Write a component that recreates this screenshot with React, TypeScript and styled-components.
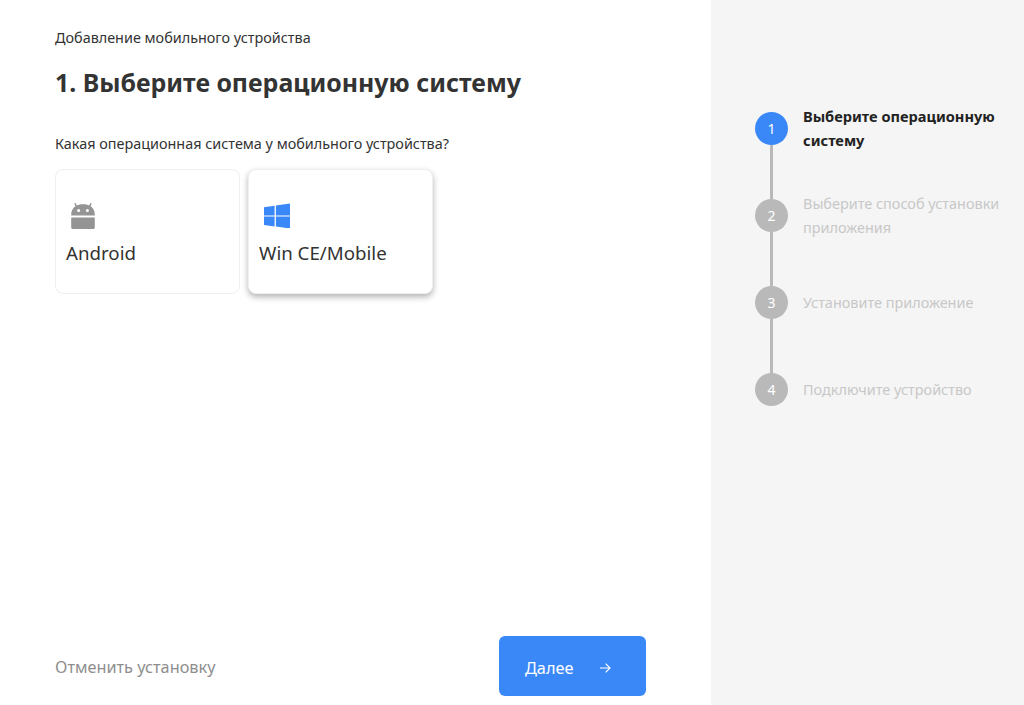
import React from 'react'
import styled, { createGlobalStyle } from 'styled-components'

const GlobalStyle = createGlobalStyle`
  html, body {
    margin: 0;
    padding: 0;
    background: #fff;
    font-family: "Noto Sans", "Open Sans", sans-serif;
    color: #333;
  }
`

const AndroidIcon = () => (
  <svg width="26" height="28" viewBox="0 0 26 28" fill="#949494">
    <path d="M1.2 14.5V13.5C1.2 9.8 2.8 6.9 5.4 5.2L4.3 2.6l1.3-.6 1.2 2.5C8.5 3.7 10.6 3.2 13 3.2s4.5.5 6.2 1.3L20.4 2l1.3.6-1.1 2.6c2.6 1.7 4.2 4.6 4.2 8.3v1H1.2z" />
    <circle cx="8.6" cy="9.6" r="1.5" fill="#fff" />
    <circle cx="17.4" cy="9.6" r="1.5" fill="#fff" />
    <path d="M1.2 16.5h23.6v10c0 .9-.7 1.5-1.5 1.5H2.7c-.8 0-1.5-.6-1.5-1.5v-10z" />
  </svg>
)

const WindowsIcon = () => (
  <svg width="26" height="26" viewBox="0 -1 26 26" fill="#3a88f8">
    <path d="M0 4.2l10.6-1.5v9.7H0V4.2z" />
    <path d="M11.9 2.5L26 .5v11.9H11.9V2.5z" />
    <path d="M0 13.6h10.6v9.8L0 21.9v-8.3z" />
    <path d="M11.9 13.6H26v11.9l-14.1-2V13.6z" />
  </svg>
)

const ArrowIcon = () => (
  <svg width="12" height="12" viewBox="0 0 12 12" fill="none" stroke="#fff" strokeWidth="1.2">
    <path d="M1 6h10M6.6 1.6L11 6l-4.4 4.4" />
  </svg>
)

const STEPS = [
  'Выберите операционную систему',
  'Выберите способ установки приложения',
  'Установите приложение',
  'Подключите устройство',
]

export default function App() {
  return (
    <>
      <GlobalStyle />
      <Page>
        <Main>
          <Crumb>Добавление мобильного устройства</Crumb>
          <Title>1. Выберите операционную систему</Title>
          <Question>Какая операционная система у мобильного устройства?</Question>
          <Cards>
            <Card>
              <IconSlot><AndroidIcon /></IconSlot>
              <CardLabel>Android</CardLabel>
            </Card>
            <Card $raised>
              <IconSlot $offset={5}><WindowsIcon /></IconSlot>
              <CardLabel>Win CE/Mobile</CardLabel>
            </Card>
          </Cards>
          <Footer>
            <Cancel>Отменить установку</Cancel>
            <NextButton>
              Далее
              <ArrowIcon />
            </NextButton>
          </Footer>
        </Main>
        <Side>
          {STEPS.map((text, i) => (
            <Step key={text}>
              <Rail>
                <Circle $active={i === 0}>{i + 1}</Circle>
                {i < STEPS.length - 1 && <Line />}
              </Rail>
              <StepText $active={i === 0}>{text}</StepText>
            </Step>
          ))}
        </Side>
      </Page>
    </>
  )
}

const Page = styled.div`
  display: flex;
  width: 1024px;
  height: 705px;
  overflow: hidden;
`

const Main = styled.main`
  flex: 0 0 711px;
  box-sizing: border-box;
  display: flex;
  flex-direction: column;
  padding: 28px 65px 9px 55px;
`

const Crumb = styled.div`
  font-size: 14.4px;
  line-height: 19px;
  color: #333;
`

const Title = styled.h1`
  margin: 17px 0 0;
  font-size: 24.9px;
  line-height: 36px;
  font-weight: 700;
  color: #333;
`

const Question = styled.p`
  margin: 34px 0 0;
  font-size: 14.4px;
  line-height: 20px;
  color: #333;
`

const Cards = styled.div`
  display: flex;
  gap: 8px;
  margin-top: 15px;
`

const Card = styled.div<{ $raised?: boolean }>`
  box-sizing: border-box;
  width: 185px;
  height: 125px;
  padding: 3px 10px 0;
  display: flex;
  flex-direction: column;
  justify-content: center;
  border: 1px solid #efefef;
  border-radius: 8px;
  background: #fff;
  box-shadow: ${(p) => (p.$raised ? '0 3px 6px rgba(0, 0, 0, 0.3)' : 'none')};
`

const IconSlot = styled.div<{ $offset?: number }>`
  height: 28px;
  padding-left: ${(p) => p.$offset ?? 4}px;
  display: flex;
  align-items: center;
`

const CardLabel = styled.div`
  margin-top: 11px;
  font-size: 18.7px;
  line-height: 25px;
  color: #333;
`

const Footer = styled.div`
  margin-top: auto;
  display: flex;
  align-items: center;
  justify-content: space-between;
`

const Cancel = styled.span`
  margin-top: 2px;
  font-size: 16.3px;
  color: #8e8e8e;
`

const NextButton = styled.button`
  box-sizing: border-box;
  width: 147px;
  height: 60px;
  padding: 3px 35px 0 26px;
  display: flex;
  align-items: center;
  justify-content: space-between;
  border: 0;
  border-radius: 6px;
  background: #3a88f8;
  color: #fff;
  font-family: inherit;
  font-size: 16.3px;
`

const Side = styled.aside`
  flex: 1;
  box-sizing: border-box;
  background: #f5f5f5;
  padding: 112px 20px 0 44px;
`

const Step = styled.div`
  display: flex;
  gap: 15px;
  height: 87px;
`

const Rail = styled.div`
  flex: 0 0 33px;
  display: flex;
  flex-direction: column;
  align-items: center;
`

const Circle = styled.div<{ $active?: boolean }>`
  flex: 0 0 33px;
  width: 33px;
  border-radius: 50%;
  display: flex;
  align-items: center;
  justify-content: center;
  font-size: 14px;
  color: #fff;
  background: ${(p) => (p.$active ? '#3a88f8' : '#b9b9b9')};
`

const Line = styled.div`
  flex: 1;
  width: 3px;
  background: #b9b9b9;
`

const StepText = styled.div<{ $active?: boolean }>`
  height: 33px;
  margin-top: ${(p) => (p.$active ? '-1px' : '0')};
  display: flex;
  align-items: center;
  font-size: ${(p) => (p.$active ? '14.6px' : '14.45px')};
  line-height: 24px;
  font-weight: ${(p) => (p.$active ? 700 : 400)};
  color: ${(p) => (p.$active ? '#222' : '#c8c8c8')};
`
